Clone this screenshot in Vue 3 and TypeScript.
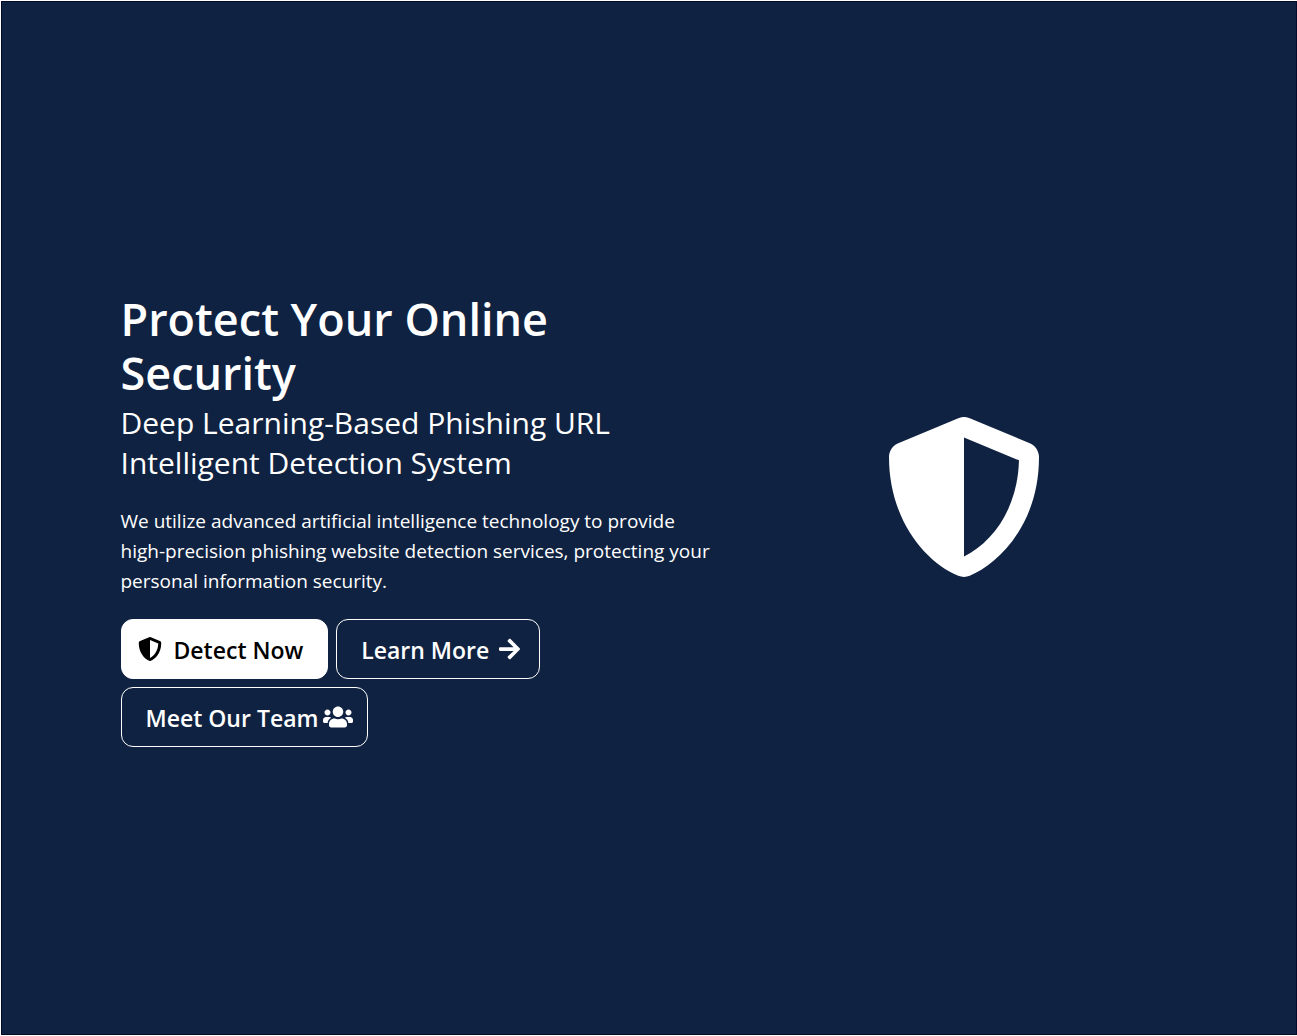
<script setup lang="ts">
interface Icon {
  width: number
  path: string
}

const shield: Icon = {
  width: 512,
  path: 'M466.5 83.7l-192-80a48.15 48.15 0 0 0-36.9 0l-192 80C27.7 91.1 16 108.6 16 128c0 198.5 114.5 335.7 221.5 380.3 11.8 4.9 25.1 4.9 36.9 0C360.1 472.6 496 349.3 496 128c0-19.4-11.7-36.9-29.5-44.3zM256.1 446.3l-.1-381 175.9 73.3c-3.3 151.4-82.1 261.1-175.8 307.7z',
}

const arrow: Icon = {
  width: 448,
  path: 'M190.5 66.9l22.2-22.2c9.4-9.4 24.6-9.4 33.9 0L441 239c9.4 9.4 9.4 24.6 0 33.9L246.6 467.3c-9.4 9.4-24.6 9.4-33.9 0l-22.2-22.2c-9.5-9.5-9.3-25 .4-34.3L311.4 296H24c-13.3 0-24-10.7-24-24v-32c0-13.3 10.7-24 24-24h287.4L190.9 101.2c-9.8-9.3-10-24.8-.4-34.3z',
}

const users: Icon = {
  width: 640,
  path: 'M96 224c35.3 0 64-28.7 64-64s-28.7-64-64-64-64 28.7-64 64 28.7 64 64 64zm448 0c35.3 0 64-28.7 64-64s-28.7-64-64-64-64 28.7-64 64 28.7 64 64 64zm32 32h-64c-17.6 0-33.5 7.1-45.1 18.6 40.3 22.1 68.9 62 75.1 109.4h66c17.7 0 32-14.3 32-32v-32c0-35.3-28.7-64-64-64zm-256 0c61.9 0 112-50.1 112-112S381.9 32 320 32 208 82.1 208 144s50.1 112 112 112zm76.8 32h-8.3c-20.8 10-43.9 16-68.5 16s-47.6-6-68.5-16h-8.3C179.6 288 128 339.6 128 403.2V432c0 26.5 21.5 48 48 48h288c26.5 0 48-21.5 48-48v-28.8c0-63.6-51.6-115.2-115.2-115.2zm-223.7-13.4C161.5 263.1 145.6 256 128 256H64c-35.3 0-64 28.7-64 64v32c0 17.7 14.3 32 32 32h65.9c6.3-47.4 34.9-87.3 75.2-109.4z',
}
</script>

<template>
  <div class="page">
    <main class="hero">
      <div class="container">
        <section class="copy">
          <h1 class="title">Protect Your Online Security</h1>
          <p class="subtitle">Deep Learning-Based Phishing URL Intelligent Detection System</p>
          <p class="lead">
            We utilize advanced artificial intelligence technology to provide high-precision
            phishing website detection services, protecting your personal information security.
          </p>
          <div class="actions">
            <button type="button" class="btn btn-primary">
              <svg class="icon" :viewBox="`0 0 ${shield.width} 512`" aria-hidden="true"><path :d="shield.path" /></svg>
              <span class="label">Detect Now</span>
            </button>
            <button type="button" class="btn btn-learn">
              <span class="label">Learn More</span>
              <svg class="icon" :viewBox="`0 0 ${arrow.width} 512`" aria-hidden="true"><path :d="arrow.path" /></svg>
            </button>
            <button type="button" class="btn btn-team">
              <span class="label">Meet Our Team</span>
              <svg class="icon" :viewBox="`0 0 ${users.width} 512`" aria-hidden="true"><path :d="users.path" /></svg>
            </button>
          </div>
        </section>
        <div class="visual">
          <svg class="emblem" :viewBox="`0 0 ${shield.width} 512`" aria-hidden="true"><path :d="shield.path" /></svg>
        </div>
      </div>
    </main>
  </div>
</template>

<style>
body {
  margin: 0;
  background: #fff;
}
</style>

<style scoped>
.page {
  box-sizing: border-box;
  min-height: 100vh;
  padding: 1px 0 1px 1px;
  display: flex;
}

.hero {
  box-sizing: border-box;
  flex: 1;
  padding: 3px 1px 0 0;
  display: flex;
  align-items: center;
  justify-content: center;
  border: 1px solid #020b2b;
  background: #102241;
  color: #fff;
  font-family: 'Segoe UI', 'Open Sans', sans-serif;
}

.container {
  width: 100%;
  max-width: 1080px;
  display: grid;
  grid-template-columns: 7fr 5fr;
  align-items: center;
}

.copy,
.visual {
  padding: 0 12px;
}

.visual {
  display: flex;
  justify-content: center;
  padding-bottom: 45px;
}

.title {
  margin: 0;
  font-size: 45px;
  line-height: 54px;
  font-weight: 600;
}

.subtitle {
  margin: 3px 0 23px;
  font-size: 30px;
  line-height: 40px;
}

.lead {
  max-width: 596px;
  margin: 0 0 23px;
  font-size: 19px;
  line-height: 30px;
}

.actions {
  display: flex;
  flex-wrap: wrap;
  gap: 8px;
}

.btn {
  box-sizing: border-box;
  height: 60px;
  display: inline-flex;
  align-items: center;
  border: 1px solid #fff;
  border-radius: 12px;
  background: transparent;
  color: #fff;
  font-family: inherit;
  font-size: 23px;
  line-height: 36px;
  font-weight: 600;
  cursor: pointer;
}

.btn-primary {
  gap: 12px;
  padding: 0 24px 0 16px;
  background: #fff;
  color: #000;
}

.btn-learn {
  gap: 10px;
  padding: 0 19px 0 24px;
}

.btn-team {
  gap: 5px;
  padding: 0 14px 0 24px;
}

.label {
  padding-top: 2px;
}

.icon {
  height: 24px;
  fill: currentColor;
}

.emblem {
  width: 160px;
  height: 160px;
  fill: currentColor;
}
</style>
